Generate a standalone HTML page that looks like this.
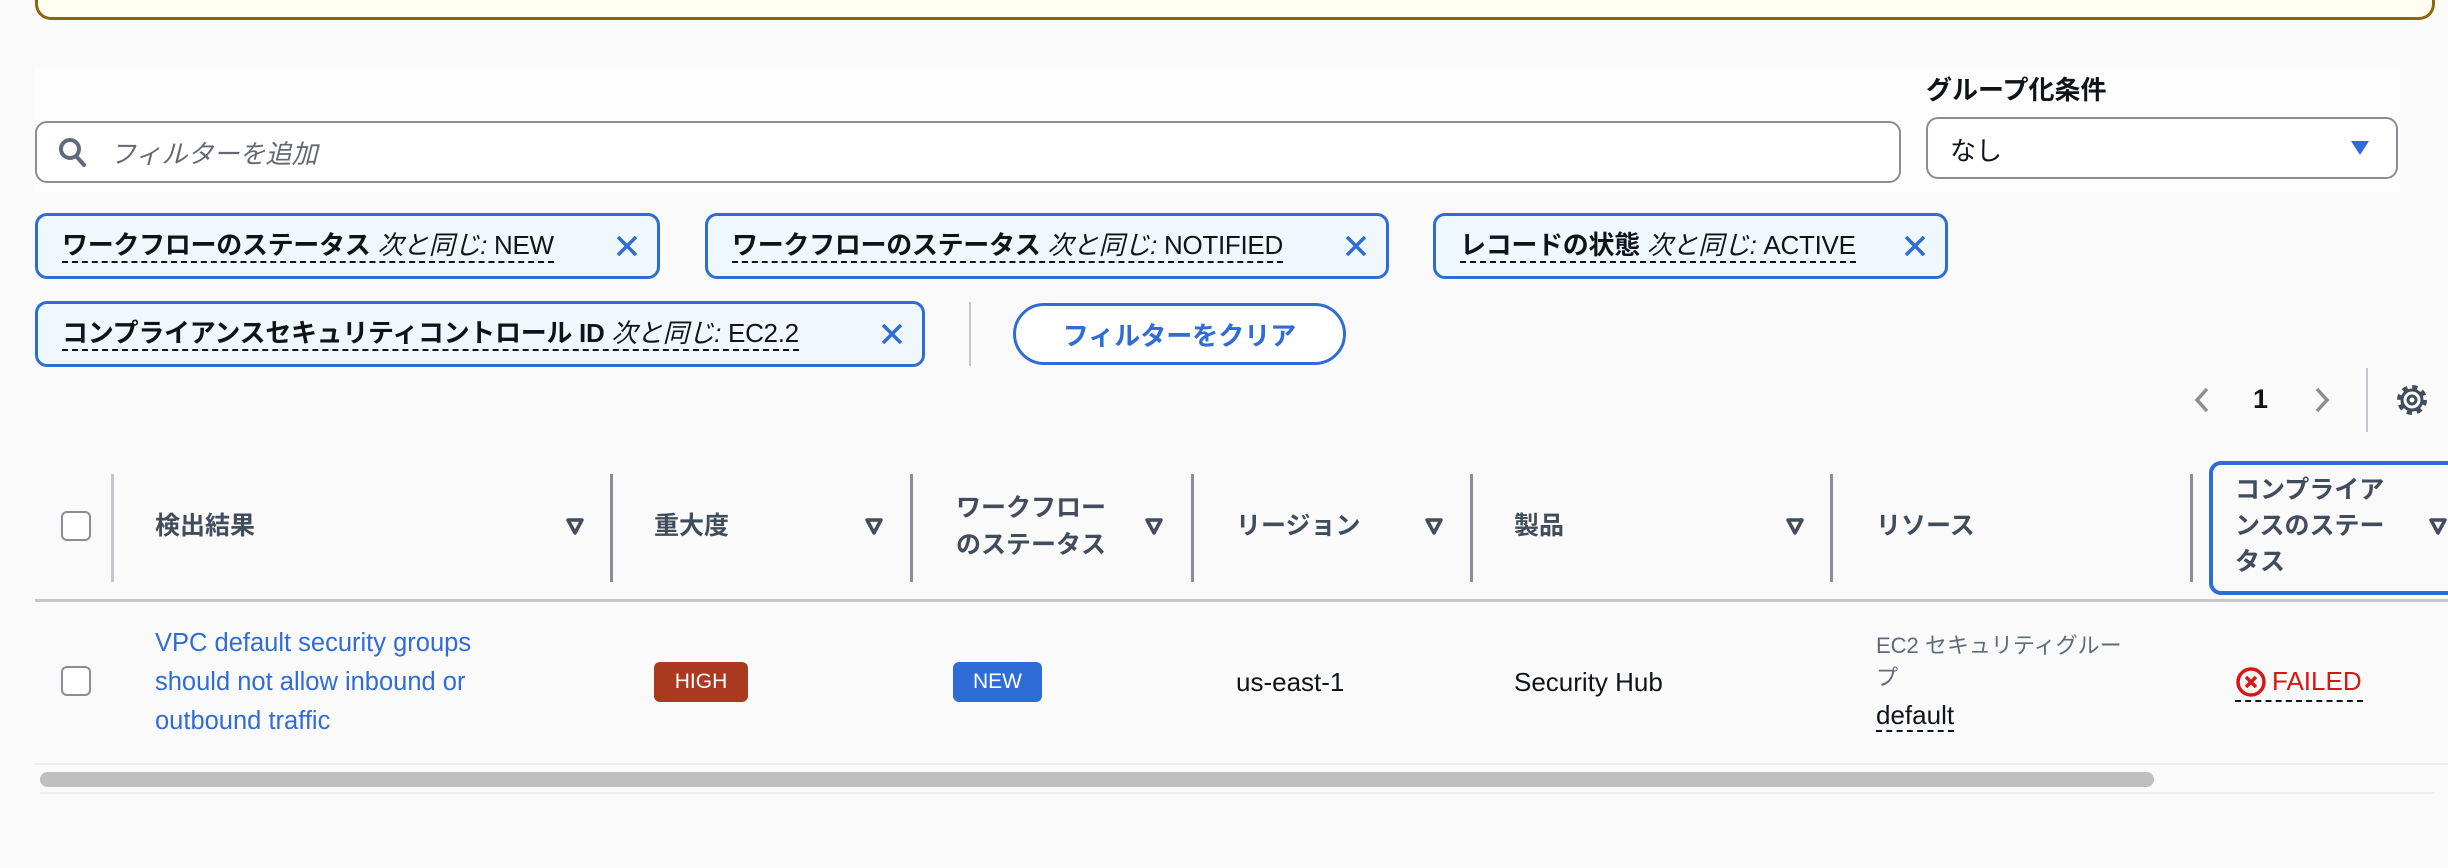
<!DOCTYPE html>
<html><head><meta charset="utf-8"><style>
*{box-sizing:border-box;margin:0;padding:0}
body{width:2448px;height:868px;background:#fafafa;position:relative;overflow:hidden;font-family:"Liberation Sans","Noto Sans CJK JP",sans-serif;color:#0f141a;font-size:25px}
.a{position:absolute}
.warn{left:35px;top:-20px;width:2400px;height:40px;border:3px solid #8d6605;border-top:none;border-radius:0 0 16px 16px;background:#fffef0}
.panel{left:35px;top:68px;width:2365px;height:124px;background:#fdfdfd}
.search{left:35px;top:121px;width:1866px;height:62px;border:2px solid #8c8c94;border-radius:12px;background:#fff}
.chip{height:66px;border:3px solid #2f6cd6;border-radius:12px;background:#f0f8ff;font-size:26px;padding:0 18px 0 24px;display:flex;align-items:center;justify-content:space-between;white-space:nowrap}
.chip .t{border-bottom:2px dashed #0f141a;line-height:31px;font-weight:bold;letter-spacing:-0.3px}
.chip .t i{font-weight:normal}
.hd{font-weight:bold;color:#414d5c;font-size:25px;line-height:37px}
.vd{top:474px;width:3px;height:108px;background:#8c8c94}
.sort{top:516px}
.cb{width:30px;height:30px;border:2px solid #8c8c94;border-radius:6px;background:#fff}
.badge{height:40px;border-radius:6px;color:#fff;font-size:21px;display:flex;align-items:center;justify-content:center}
</style></head><body>
<div class="a warn"></div>
<div class="a panel"></div>
<div class="a search"></div>
<svg class="a" style="left:58px;top:136px" width="30" height="32" viewBox="0 0 30 32"><circle cx="12" cy="13" r="9" fill="none" stroke="#5f6b7a" stroke-width="4"/><path d="M18 20l8 9" stroke="#5f6b7a" stroke-width="4" stroke-linecap="round"/></svg>
<div class="a" style="left:110px;top:134px;font-style:italic;color:#656871;font-size:26px">フィルターを追加</div>
<div class="a" style="left:1926px;top:70px;font-weight:bold;font-size:26px">グループ化条件</div>
<div class="a" style="left:1926px;top:117px;width:472px;height:62px;border:2px solid #8c8c94;border-radius:12px;background:#fff"></div>
<div class="a" style="left:1950px;top:131px;font-size:26px">なし</div>
<svg class="a" style="left:2350px;top:140px" width="20" height="16"><path d="M1 1h18L10 15z" fill="#2f6cd6"/></svg>

<div class="a chip" style="left:35px;top:213px;width:625px"><span class="t">ワークフローのステータス <i>次と同じ:</i> <span style="font-weight:normal">NEW</span></span><svg width="24" height="24"><path d="M3 3l18 18M21 3L3 21" stroke="#2f6cd6" stroke-width="3.5"/></svg></div>
<div class="a chip" style="left:705px;top:213px;width:684px"><span class="t">ワークフローのステータス <i>次と同じ:</i> <span style="font-weight:normal">NOTIFIED</span></span><svg width="24" height="24"><path d="M3 3l18 18M21 3L3 21" stroke="#2f6cd6" stroke-width="3.5"/></svg></div>
<div class="a chip" style="left:1433px;top:213px;width:515px"><span class="t">レコードの状態 <i>次と同じ:</i> <span style="font-weight:normal">ACTIVE</span></span><svg width="24" height="24"><path d="M3 3l18 18M21 3L3 21" stroke="#2f6cd6" stroke-width="3.5"/></svg></div>
<div class="a chip" style="left:35px;top:301px;width:890px"><span class="t">コンプライアンスセキュリティコントロール ID <i>次と同じ:</i> <span style="font-weight:normal">EC2.2</span></span><svg width="24" height="24"><path d="M3 3l18 18M21 3L3 21" stroke="#2f6cd6" stroke-width="3.5"/></svg></div>
<div class="a" style="left:969px;top:302px;width:2px;height:64px;background:#c6c6cd"></div>
<div class="a" style="left:1013px;top:303px;width:333px;height:62px;border:3px solid #2f6cd6;border-radius:31px;background:#fff;color:#2f6cd6;font-weight:bold;font-size:26px;display:flex;align-items:center;justify-content:center">フィルターをクリア</div>

<svg class="a" style="left:2192px;top:386px" width="20" height="28"><path d="M15 3L5 14l10 11" fill="none" stroke="#8c8c94" stroke-width="3.5"/></svg>
<div class="a" style="left:2253px;top:384px;font-weight:bold;font-size:27px">1</div>
<svg class="a" style="left:2312px;top:386px" width="20" height="28"><path d="M5 3l10 11L5 25" fill="none" stroke="#8c8c94" stroke-width="3.5"/></svg>
<div class="a" style="left:2366px;top:368px;width:2px;height:64px;background:#c6c6cd"></div>
<svg class="a" style="left:2396px;top:384px" width="32" height="32" viewBox="0 0 32 32"><circle cx="16" cy="16" r="12.5" fill="none" stroke="#414d5c" stroke-width="5" stroke-dasharray="5 4.8"/><circle cx="16" cy="16" r="10" fill="#fafafa" stroke="#414d5c" stroke-width="3"/><circle cx="16" cy="16" r="4" fill="none" stroke="#414d5c" stroke-width="3"/></svg>

<!-- table header -->
<div class="a cb" style="left:61px;top:511px"></div>
<div class="a vd" style="left:111px;background:#c6c6cd"></div>
<div class="a hd" style="left:155px;top:508px">検出結果</div>
<svg class="a sort" style="left:565px" width="20" height="20"><path d="M3 4h14l-7 13z" fill="none" stroke="#414d5c" stroke-width="3.5" stroke-linejoin="round"/></svg>
<div class="a vd" style="left:610px"></div>
<div class="a hd" style="left:654px;top:508px">重大度</div>
<svg class="a sort" style="left:864px" width="20" height="20"><path d="M3 4h14l-7 13z" fill="none" stroke="#414d5c" stroke-width="3.5" stroke-linejoin="round"/></svg>
<div class="a vd" style="left:910px"></div>
<div class="a hd" style="left:956px;top:490px">ワークフロー<br>のステータス</div>
<svg class="a sort" style="left:1144px" width="20" height="20"><path d="M3 4h14l-7 13z" fill="none" stroke="#414d5c" stroke-width="3.5" stroke-linejoin="round"/></svg>
<div class="a vd" style="left:1191px"></div>
<div class="a hd" style="left:1236px;top:508px">リージョン</div>
<svg class="a sort" style="left:1424px" width="20" height="20"><path d="M3 4h14l-7 13z" fill="none" stroke="#414d5c" stroke-width="3.5" stroke-linejoin="round"/></svg>
<div class="a vd" style="left:1470px"></div>
<div class="a hd" style="left:1514px;top:508px">製品</div>
<svg class="a sort" style="left:1785px" width="20" height="20"><path d="M3 4h14l-7 13z" fill="none" stroke="#414d5c" stroke-width="3.5" stroke-linejoin="round"/></svg>
<div class="a vd" style="left:1830px"></div>
<div class="a hd" style="left:1876px;top:508px">リソース</div>
<div class="a vd" style="left:2190px"></div>
<div class="a" style="left:2209px;top:461px;width:260px;height:134px;border:4px solid #2f6cd6;border-radius:12px"></div>
<div class="a hd" style="left:2235px;top:472px;line-height:36px">コンプライア<br>ンスのステー<br>タス</div>
<svg class="a sort" style="left:2428px" width="20" height="20"><path d="M3 4h14l-7 13z" fill="none" stroke="#414d5c" stroke-width="3.5" stroke-linejoin="round"/></svg>
<div class="a" style="left:35px;top:599px;width:2413px;height:3px;background:#c6c6cd"></div>

<!-- row -->
<div class="a cb" style="left:61px;top:666px"></div>
<div class="a" style="left:155px;top:624px;color:#2f6cd6;line-height:39px;font-size:25.5px">VPC default security groups<br>should not allow inbound or<br>outbound traffic</div>
<div class="a badge" style="left:654px;top:662px;width:94px;background:#a93a20">HIGH</div>
<div class="a badge" style="left:953px;top:662px;width:89px;background:#2f6cd6">NEW</div>
<div class="a" style="left:1236px;top:667px;font-size:26px">us-east-1</div>
<div class="a" style="left:1514px;top:667px;font-size:26px">Security Hub</div>
<div class="a" style="left:1876px;top:630px;color:#5f6b7a;font-size:22px;line-height:32px">EC2 セキュリティグルー<br>プ</div>
<div class="a" style="left:1876px;top:700px;border-bottom:2px dashed #0f141a;line-height:30px;font-size:26px">default</div>
<svg class="a" style="left:2235px;top:666px" width="32" height="32"><circle cx="16" cy="16" r="13" fill="none" stroke="#d91515" stroke-width="3.5"/><path d="M11 11l10 10M21 11L11 21" stroke="#d91515" stroke-width="3.5"/></svg>
<div class="a" style="left:2235px;top:666px;width:128px;height:36px;border-bottom:2px dashed #0f141a"></div>
<div class="a" style="left:2272px;top:666px;color:#d91515;font-size:26px">FAILED</div>
<div class="a" style="left:35px;top:763px;width:2413px;height:2px;background:#e9ebed"></div>
<div class="a" style="left:40px;top:772px;width:2114px;height:15px;background:#bfbfbf;border-radius:8px"></div>
<div class="a" style="left:40px;top:792px;width:2395px;height:2px;background:#eeeeee"></div>
</body></html>
